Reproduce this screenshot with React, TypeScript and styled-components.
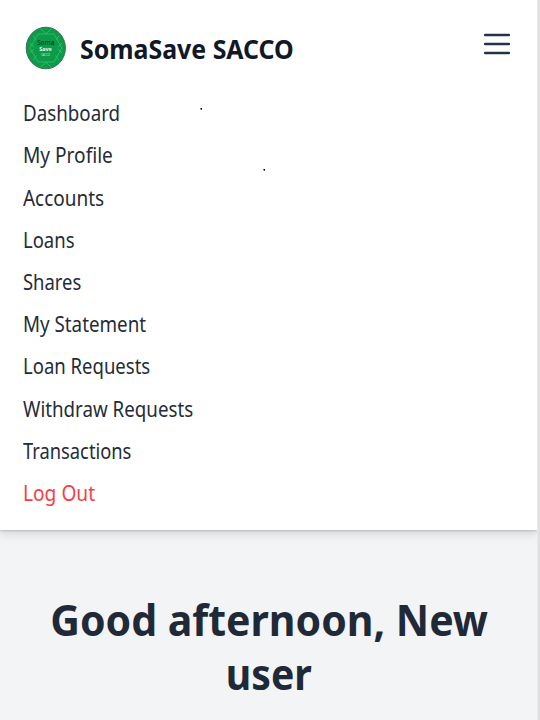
import React from 'react';
import styled, { createGlobalStyle } from 'styled-components';

const GlobalStyle = createGlobalStyle`
  * { box-sizing: border-box; }
  body {
    margin: 0;
    overflow: hidden;
    background: #f3f4f6;
    color: #1f2937;
    font-family: "Segoe UI", "Noto Sans", "Open Sans", sans-serif;
  }
`;

const Page = styled.div`
  display: flex;
  width: 540px;
  height: 720px;
  overflow: hidden;
  background: #f3f4f6;
`;

const Content = styled.div`
  flex: 1;
  min-width: 0;
  overflow: hidden;
`;

const Edge = styled.div`
  width: 3px;
  background: linear-gradient(90deg, #e9e9ea 0 1px, #dfe0e1 1px 3px);
`;

const NavPanel = styled.nav`
  position: relative;
  height: 530px;
  background: #fff;
  box-shadow: 0 1px 2px rgba(0, 0, 0, 0.16), 0 4px 9px rgba(0, 0, 0, 0.12);
`;

const TopBar = styled.header`
  display: flex;
  align-items: center;
  height: 92px;
  padding: 4px 26px 0 25px;
`;

const Brand = styled.span`
  flex: 1;
  padding: 1px 0 0 13px;
  font-size: 27px;
  line-height: 36px;
  font-weight: 700;
  color: #111827;
  white-space: nowrap;
`;

const Condensed = styled.span<{ $scale: number; $center?: boolean }>`
  display: inline-block;
  white-space: nowrap;
  transform: scaleX(${(p) => p.$scale});
  transform-origin: ${(p) => (p.$center ? 'center' : 'left')} center;
`;

const MenuButton = styled.button`
  display: flex;
  width: 28px;
  height: 28px;
  margin-top: -9px;
  padding: 0;
  border: 0;
  background: none;
`;

const MenuList = styled.ul`
  margin: 0;
  padding: 0.2px 0 0 23px;
  list-style: none;
`;

const MenuItem = styled.li<{ $danger?: boolean }>`
  height: 42.2px;
  font-size: 21px;
  line-height: 42.2px;
  color: ${(p) => (p.$danger ? '#f43f46' : '#252c38')};
`;

const Speck = styled.i<{ $x: number; $y: number }>`
  position: absolute;
  left: ${(p) => p.$x}px;
  top: ${(p) => p.$y}px;
  width: 2px;
  height: 2px;
  background: linear-gradient(90deg, #777 50%, #000 50%) 0 0 / 2px 1px no-repeat,
    linear-gradient(90deg, #bbb 50%, #555 50%) 0 1px / 2px 1px no-repeat;
`;

const Greeting = styled.h1`
  display: flex;
  flex-direction: column;
  align-items: center;
  margin: 0;
  padding: 62px 0 0 1px;
  font-size: 43.5px;
  line-height: 54px;
  font-weight: 700;
`;

const LogoText = styled.text`
  font-family: "Noto Sans", sans-serif;
  text-anchor: middle;
`;

const Logo = () => (
  <svg width="42" height="44" viewBox="0 0 42 44" aria-label="SomaSave">
    <ellipse cx="20.8" cy="22" rx="19.6" ry="20.8" fill="#0a9c48" stroke="#466b58" strokeWidth="1" />
    <g fill="none" stroke="#4cba78" strokeWidth="0.7">
      <path d="M13 8h16l8 14-8 14H13L5 22z" />
      <path d="M8 10l5 6h16l5-6M8 34l5-6h16l5 6M5 17l5 5-5 5M37 17l-5 5 5 5M16 3l5 5 5-5M16 41l5-5 5 5" />
    </g>
    <path d="M12 12h18l3 10-4 10H13L9 22z" fill="#0a9c48" />
    <LogoText x="20.8" y="18.5" fontSize="6.4" fill="#03301a">Soma</LogoText>
    <LogoText x="20.6" y="24.6" fontSize="5.4" fontWeight="700" fill="#e8faef">Save</LogoText>
    <LogoText x="20.6" y="29.6" fontSize="2.8" fill="#bfe8cf">SACCO</LogoText>
  </svg>
);

const items: { label: string; scale: number; danger?: boolean }[] = [
  { label: 'Dashboard', scale: 0.893 },
  { label: 'My Profile', scale: 0.91 },
  { label: 'Accounts', scale: 0.903 },
  { label: 'Loans', scale: 0.88 },
  { label: 'Shares', scale: 0.878 },
  { label: 'My Statement', scale: 0.895 },
  { label: 'Loan Requests', scale: 0.882 },
  { label: 'Withdraw Requests', scale: 0.892 },
  { label: 'Transactions', scale: 0.872 },
  { label: 'Log Out', scale: 0.912, danger: true },
];

export default function App() {
  return (
    <>
      <GlobalStyle />
      <Page>
        <Content>
          <NavPanel>
            <TopBar>
              <Logo />
              <Brand>
                <Condensed $scale={0.922}>SomaSave SACCO</Condensed>
              </Brand>
              <MenuButton aria-label="Menu">
                <svg width="28" height="28" viewBox="0 0 28 28" stroke="#263248" strokeWidth="2.6" strokeLinecap="round">
                  <path d="M2.2 5h23.6M2.2 14h23.6M2.2 23h23.6" />
                </svg>
              </MenuButton>
            </TopBar>
            <MenuList>
              {items.map((item) => (
                <MenuItem key={item.label} $danger={item.danger}>
                  <Condensed $scale={item.scale}>{item.label}</Condensed>
                </MenuItem>
              ))}
            </MenuList>
            <Speck $x={200} $y={108} />
            <Speck $x={263} $y={169} />
          </NavPanel>
          <Greeting>
            <Condensed $scale={0.943} $center>Good afternoon, New</Condensed>
            <Condensed $scale={0.9} $center>user</Condensed>
          </Greeting>
        </Content>
        <Edge />
      </Page>
    </>
  );
}
